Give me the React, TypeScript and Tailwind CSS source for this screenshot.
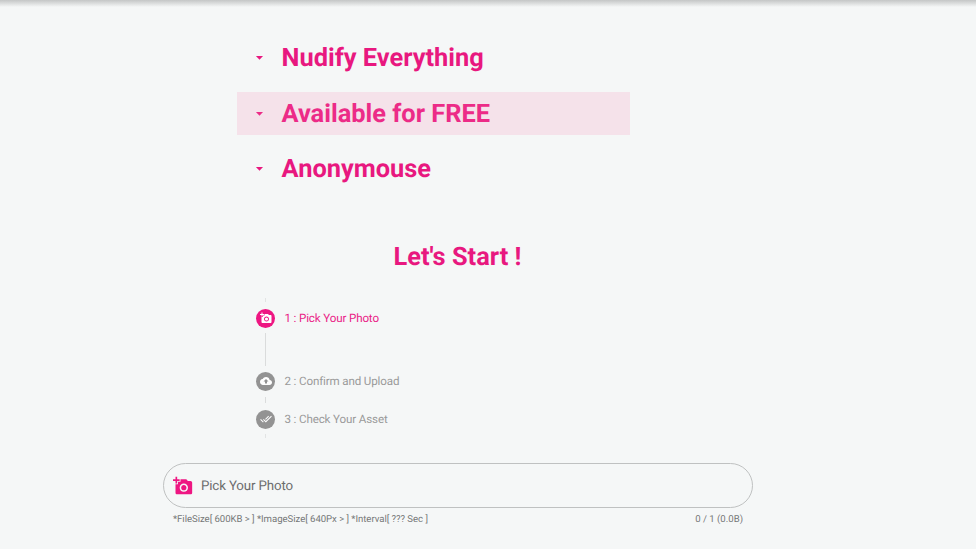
import React from "react";
import { MdArrowDropDown, MdAddAPhoto, MdCloudUpload, MdDoneAll } from "react-icons/md";

const features = [
  { label: "Nudify Everything", active: false },
  { label: "Available for FREE", active: true },
  { label: "Anonymouse", active: false },
];

function Feature({ label, active }: { label: string; active: boolean }) {
  return (
    <li className={`flex h-[43px] w-[393px] items-center pl-[14px] ${active ? "bg-[#f5e2ea] text-[#ec2b87]" : "text-[#e8187f]"}`}>
      <MdArrowDropDown className="size-[17px]" />
      <span className="ml-[13.5px] whitespace-nowrap pt-[3px] text-[25.4px] font-bold leading-none">{label}</span>
    </li>
  );
}

function Step({ icon, label, active }: { icon: React.ReactNode; label: string; active?: boolean }) {
  return (
    <div className={`flex h-5 items-center gap-[9.5px] ${active ? "text-[#ea1c86]" : "text-[#9a9a9a]"}`}>
      <span className={`flex size-[19px] items-center justify-center rounded-full ${active ? "bg-[#ee1682]" : "bg-[#939393]"}`}>
        <span className="text-white">{icon}</span>
      </span>
      <span className="text-[11.6px] leading-5 tracking-[-0.14px]">{label}</span>
    </div>
  );
}

export default function App() {
  return (
    <main className="h-[549px] w-[976px] overflow-hidden bg-[#f5f7f7] font-['Roboto',sans-serif] [text-rendering:geometricPrecision]">
      <div className="h-[7px] bg-linear-to-b from-[#c4c6c6] to-[#f5f7f7]" />
      <ul className="ml-[237px] mt-[29px] flex flex-col gap-[12.5px]">
        {features.map((f) => <Feature key={f.label} {...f} />)}
      </ul>
      <h1 className="ml-[163px] mt-[51px] w-[589px] text-center text-[25.4px] font-bold leading-[32px] text-[#e8187f]">Let's Start !</h1>
      <section className="ml-[256px] mt-[25px] flex h-[140px] flex-col">
        <div className="ml-[9px] h-1 w-px bg-[#e2e4e4]" />
        <div className="mt-[6px]"><Step active icon={<MdAddAPhoto className="size-3" />} label="1 : Pick Your Photo" /></div>
        <div className="ml-[9px] mt-[5px] h-[33px] w-px bg-[#dadcdc]" />
        <div className="mt-[5px]"><Step icon={<MdCloudUpload className="size-3" />} label="2 : Confirm and Upload" /></div>
        <div className="ml-[9px] mt-[6px] h-[6px] w-px bg-[#dadcdc]" />
        <div className="mt-[6px]"><Step icon={<MdDoneAll className="size-3" />} label="3 : Check Your Asset" /></div>
        <div className="ml-[9px] mt-[5px] h-1 w-px bg-[#e2e4e4]" />
      </section>
      <div className="ml-[163px] mt-[25px] flex h-[45px] w-[590px] items-center rounded-full border border-[#bfc1c1] pl-[9px]">
        <MdAddAPhoto className="size-5 text-[#ee1682]" />
        <span className="ml-[8px] pt-[3px] text-[13.3px] tracking-[-0.14px] text-[#6c6d6d]">Pick Your Photo</span>
      </div>
      <div className="ml-[173px] mt-[6px] flex w-[570px] justify-between text-[9.6px] leading-[12px] text-[#767777]">
        <span className="tracking-[-0.04px]">*FileSize[ 600KB &gt; ] *ImageSize[ 640Px &gt; ] *Interval[ ??? Sec ]</span>
        <span>0 / 1 (0.0B)</span>
      </div>
    </main>
  );
}
